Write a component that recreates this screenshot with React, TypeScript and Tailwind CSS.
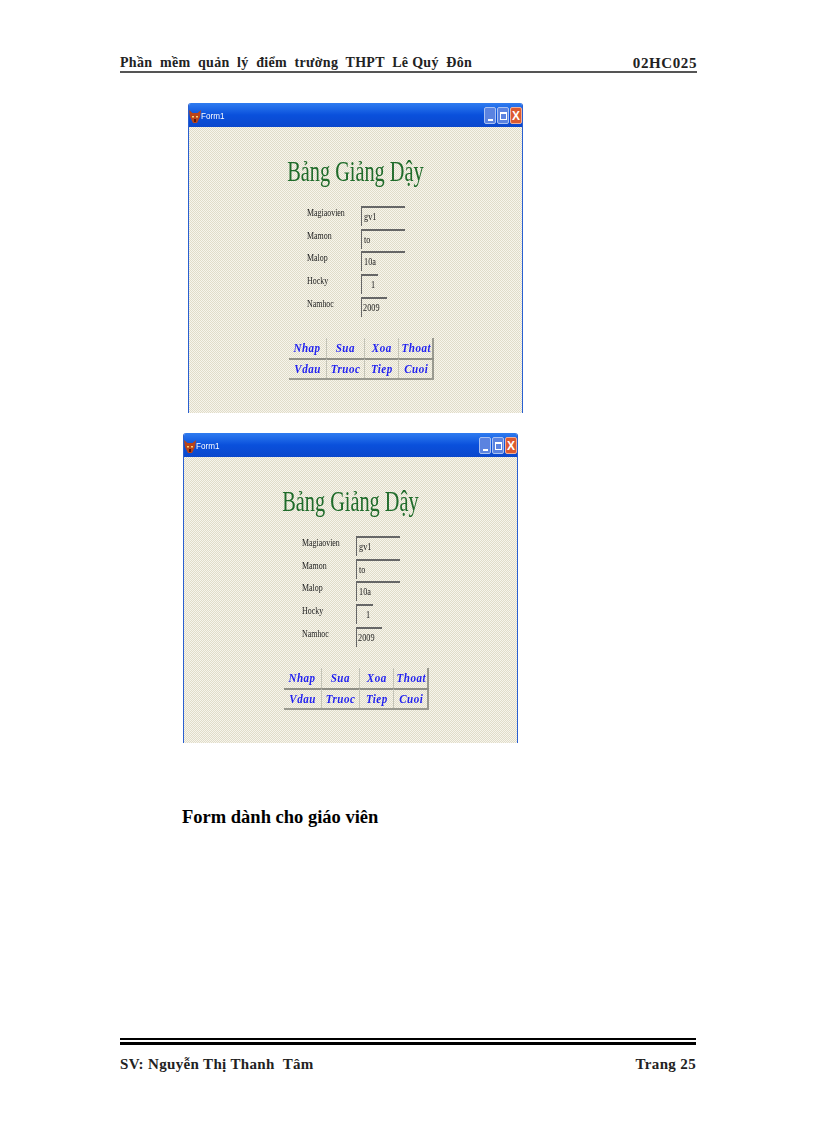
import React from "react"

const serif = { fontFamily: '"Liberation Serif", "Times New Roman", serif' }

const FIELDS = [
  { label: "Magiaovien", value: "gv1", width: "w-[44px]", align: "pl-[2px]" },
  { label: "Mamon", value: "to", width: "w-[44px]", align: "pl-[2px]" },
  { label: "Malop", value: "10a", width: "w-[44px]", align: "pl-[2px]" },
  { label: "Hocky", value: "1", width: "w-[17px]", align: "pl-[9px]" },
  { label: "Namhoc", value: "2009", width: "w-[26px]", align: "pl-[1px]" },
]

const BUTTONS = ["Nhap", "Sua", "Xoa", "Thoat", "Vdau", "Truoc", "Tiep", "Cuoi"]

const FormWindow = ({ className }: { className: string }) => {
  return (
    <div className={`w-[335px] h-[310px] flex flex-col rounded-t-[3px] border-x border-[#2a5fd0] overflow-hidden ${className}`}>
      <div className="h-[24px] shrink-0 flex items-center pr-0 bg-gradient-to-b from-[#2f7cf0] via-[#0a50dc] to-[#0b48cc]">
        <svg width="12" height="13" viewBox="0 0 12 13" className="shrink-0 mt-[2px]">
          <path d="M0 0l3.500 3h5L12 0l-1 7-3 6H4L1 7z" fill="#b8431a" />
          <path d="M3 6h2v1.500H3zM7 6h2v1.500H7z" fill="#ffd070" />
          <path d="M5 9h2v3H5z" fill="#5e1a06" />
        </svg>
        <span className="mt-[3px] text-[9px] text-white origin-left scale-x-[0.9]" style={{ fontFamily: '"Liberation Sans", Arial, sans-serif' }}>Form1</span>
        <div className="ml-auto flex gap-[1px] mt-[1px]">
          <div className="w-[12px] h-[17px] rounded-[2px] bg-[#5b83e0] border border-[#a9c1f2] flex items-end justify-center pb-[2px]">
            <div className="w-[5px] h-[2px] bg-white" />
          </div>
          <div className="w-[12px] h-[17px] rounded-[2px] bg-[#5b83e0] border border-[#a9c1f2] flex items-center justify-center">
            <div className="w-[7px] h-[8px] border border-white border-t-2" />
          </div>
          <div className="w-[12px] h-[17px] rounded-[2px] bg-[#dd5a30] border border-[#f0b09a] flex items-center justify-center text-[12px] font-bold leading-none text-white" style={{ fontFamily: '"Liberation Sans", Arial, sans-serif' }}>
            X
          </div>
        </div>
      </div>

      <div
        className="flex-1 flex flex-col items-center bg-[repeating-conic-gradient(#f7f5ec_0_25%,#e0dcc9_0_50%)] bg-[length:2px_2px]"
        style={serif}
      >
        <div className="mt-[25px] h-[38px] text-[29px] leading-[38px] text-[#1f6b2a] whitespace-nowrap scale-x-[0.7] blur-[0.3px]">
          Bảng Giảng Dậy
        </div>

        <div className="mt-[16px] w-[98px] flex flex-col gap-[2.7px] self-start ml-[118px] blur-[0.3px]">
          {FIELDS.map((field) => (
            <div key={field.label} className="h-[20px] flex">
              <div className="w-[54px] text-[11px] leading-[12px] text-[#222] origin-left scale-x-[0.72] whitespace-nowrap">{field.label}</div>
              <div className={`h-[20px] border-t-2 border-l border-[#666] ${field.width} ${field.align} pt-[1px] text-[11px] leading-[14px] text-[#222]`}>
                <span className="inline-block origin-left scale-x-[0.75]">{field.value}</span>
              </div>
            </div>
          ))}
        </div>

        <div className="mt-[21px] self-start ml-[100px] w-[145px] grid grid-cols-[37px_38px_34px_36px] border-r-2 border-b-2 border-[#9a9a90] blur-[0.3px]">
          {BUTTONS.map((name, i) => (
            <div
              key={name}
              className={`h-[20px] flex items-center justify-center text-[13px] font-bold italic text-[#2222f0] border-[#c4c4b8] ${i > 3 ? "border-t-2 border-t-[#8f8f86]" : ""} ${i % 4 > 0 ? "border-l" : ""}`}
            >
              <span className="inline-block scale-x-[0.85] tracking-[0.6px]">{name}</span>
            </div>
          ))}
        </div>
      </div>
    </div>
  )
}

export default function App() {
  return (
    <div className="w-[816px] h-[1123px] bg-white flex flex-col text-black overflow-hidden" style={serif}>
      <div className="mt-[53px] ml-[120px] w-[577px] h-[20px] flex justify-between items-end border-b-2 border-[#555] font-bold text-[14px] leading-[16px] text-[#222] whitespace-pre">
        <span className="tracking-[0.3px]">Phần  mềm  quản  lý  điểm  trường  THPT  Lê Quý  Đôn</span>
        <span className="text-[15px] tracking-[0.6px]">02HC025</span>
      </div>

      <FormWindow className="mt-[30px] ml-[188px]" />
      <FormWindow className="mt-[20px] ml-[183px]" />

      <div className="mt-[63px] ml-[182px] h-[22px] text-[18.5px] leading-[22px] font-bold">Form dành cho giáo viên</div>

      <div className="mt-auto mb-[50px] ml-[120px] w-[576px] flex flex-col">
        <div className="h-[7px] border-t-2 border-b-[3px] border-black" />
        <div className="mt-[10px] flex justify-between font-bold text-[15px] leading-[18px] text-[#222] whitespace-pre tracking-[0.35px]">
          <span>SV: Nguyễn Thị Thanh  Tâm</span>
          <span>Trang 25</span>
        </div>
      </div>
    </div>
  )
}
